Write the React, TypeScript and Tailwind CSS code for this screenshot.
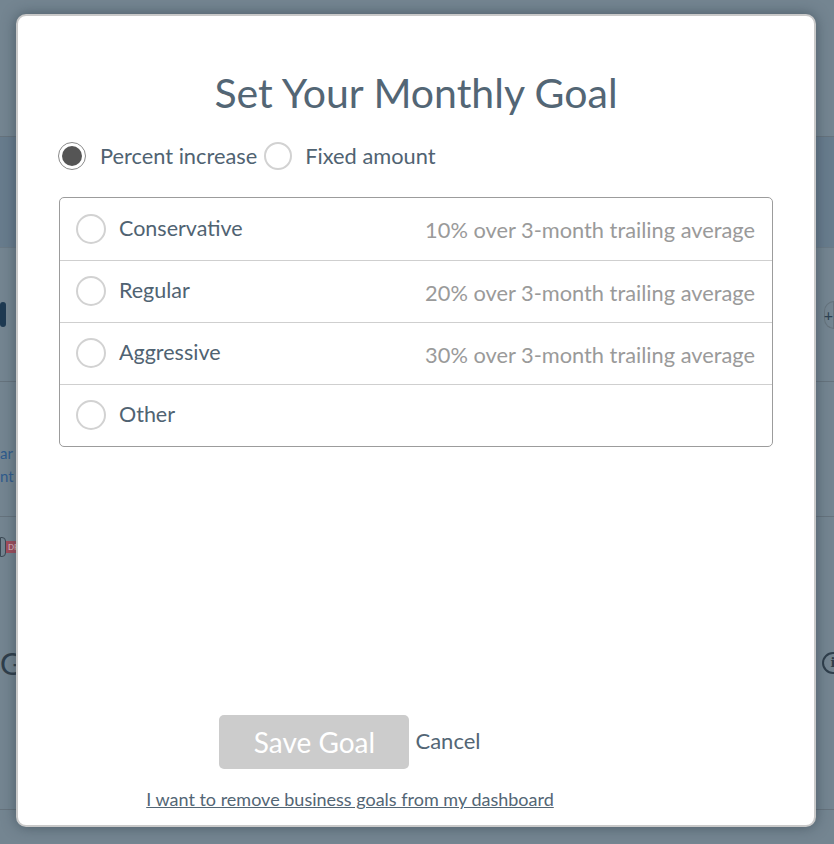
import { useState } from 'react';

const OPTIONS = [
  { id: 'conservative', label: 'Conservative', note: '10% over 3-month trailing average' },
  { id: 'regular', label: 'Regular', note: '20% over 3-month trailing average' },
  { id: 'aggressive', label: 'Aggressive', note: '30% over 3-month trailing average' },
  { id: 'other', label: 'Other', note: '' },
];

function Radio({ checked, size = 'md' }: { checked: boolean; size?: 'sm' | 'md' }) {
  const box = size === 'sm' ? 'w-[28px] h-[28px]' : 'w-[30px] h-[30px]';
  return (
    <span
      className={`${box} shrink-0 rounded-full flex items-center justify-center bg-white ${
        checked ? 'border border-[#8a8a8a]' : 'border-2 border-[#d2d2d2]'
      }`}
    >
      {checked && <span className="w-[20px] h-[20px] rounded-full bg-[#555555]" />}
    </span>
  );
}

export default function App() {
  const [mode, setMode] = useState<'percent' | 'fixed'>('percent');
  const [choice, setChoice] = useState<string | null>(null);

  return (
    <div className="relative w-[834px] h-[844px] overflow-hidden bg-[#748591] font-['Lato',sans-serif]">
      {/* --- page behind the overlay --- */}
      <div className="flex flex-col h-full">
        <div className="h-[137px] border-b border-[#66737d]" />
        <div className="h-[111px] bg-[#687c8d] border-b border-[#6b7a86]" />
        <div className="h-[134px] border-b border-[#66737d] flex items-center">
          <span className="w-[6px] h-[25px] bg-[#1e3a52] rounded-sm" />
          <div className="ml-auto w-[10px] h-[28px] rounded-l-full border border-[#66737d] flex items-center justify-end text-[#2e4152] text-[16px] leading-none">+</div>
        </div>
        <div className="h-[135px] border-b border-[#66737d] flex flex-col pt-[60px] text-[#2f5b8d] text-[15px] leading-[23px]">
          <span>ar</span>
          <span>nt</span>
        </div>
        <div className="h-[293px] border-b border-[#66737d] flex flex-col">
          <div className="h-[60px] flex items-center">
            <span className="w-[6px] h-[20px] border border-[#3b4854] rounded-r-sm" />
            <span className="text-[8px] bg-[#a34d5c] text-[#e7c6cb] px-[2px] leading-[12px]">DF</span>
          </div>
          <div className="flex items-center justify-between mt-[71px]">
            <span className="text-[30px] text-[#2f3e4b] leading-none">Gr</span>
            <span className="w-[22px] h-[22px] rounded-full border-2 border-[#2f3e4b] text-[#2f3e4b] text-[13px] font-bold flex items-center justify-center -mr-[10px] font-['DejaVu_Serif',serif]">i</span>
          </div>
        </div>
      </div>

      {/* --- modal --- */}
      <div className="absolute left-[16px] top-[14px] w-[800px] h-[813px] bg-white rounded-[10px] border-2 border-[#c9c9c9] shadow-[0_0_14px_rgba(40,55,65,0.55)] flex flex-col text-[#506372]">
        <h2 className="text-center text-[41px] leading-none pt-[56px] text-[#536675]">Set Your Monthly Goal</h2>

        <div className="flex items-center mt-[27px] ml-[40px] text-[21.8px]">
          <button className="flex items-center gap-[14px]" onClick={() => setMode('percent')}>
            <Radio checked={mode === 'percent'} size="sm" />
            <span>Percent increase</span>
          </button>
          <button className="flex items-center gap-[13px] ml-[7px]" onClick={() => setMode('fixed')}>
            <Radio checked={mode === 'fixed'} size="sm" />
            <span>Fixed amount</span>
          </button>
        </div>

        <div className="mt-[24px] mx-[41px] border border-[#9c9c9c] rounded-[5px] flex flex-col">
          {OPTIONS.map((o, i) => (
            <button
              key={o.id}
              onClick={() => setChoice(o.id)}
              className={`h-[62px] flex items-center pl-[16px] pr-[17px] text-left ${
                i > 0 ? 'border-t border-[#cfcfcf]' : ''
              }`}
            >
              <Radio checked={choice === o.id} />
              <span className="ml-[13px] text-[21.5px] -mt-[2px]">{o.label}</span>
              <span className="ml-auto text-[21.8px] text-[#9a9a9a] mt-[4px]">{o.note}</span>
            </button>
          ))}
        </div>

        <div className="mt-auto pb-[12px] pr-[132px] flex flex-col items-center">
          <div className="flex items-start gap-[6px]">
            <button className="w-[190px] h-[54px] rounded-[5px] bg-[#cccccc] text-white text-[28px]">Save Goal</button>
            <button className="text-[22px] mt-[9px] text-[#536675]">Cancel</button>
          </div>
          <a href="#" className="mt-[17px] text-[18px] underline text-[#536675]">
            I want to remove business goals from my dashboard
          </a>
        </div>
      </div>
    </div>
  );
}
